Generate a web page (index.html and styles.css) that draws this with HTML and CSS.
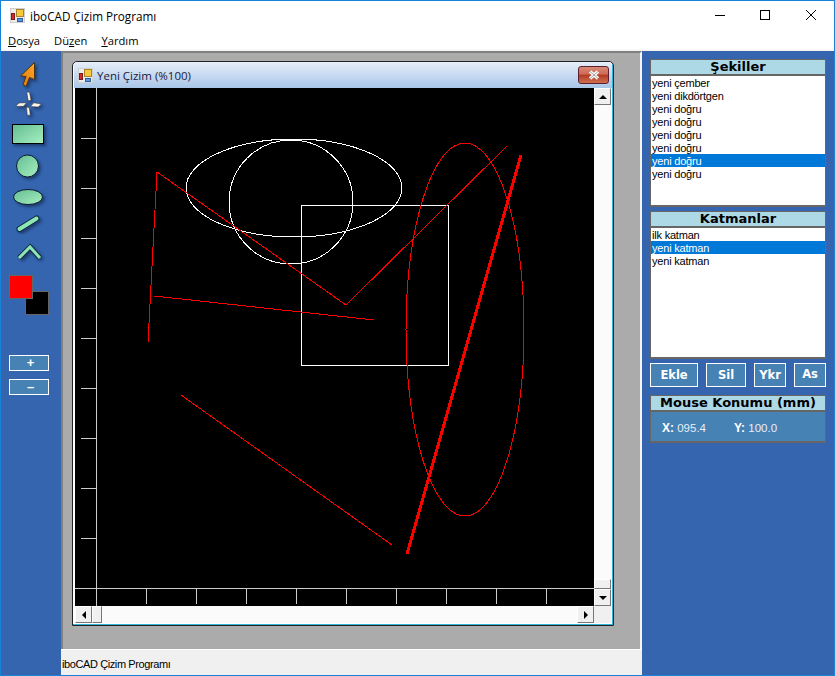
FILE: index.html
```html
<!DOCTYPE html>
<html lang="en">
<head>
	<meta charset="UTF-8">
	<title>iboCAD Çizim Programı</title>
	<link rel="stylesheet" href="styles.css">
</head>
<body>
<div class="app">

	<!-- shared gradients for the toolbar icons -->
	<svg class="defs" width="0" height="0">
		<defs>
			<linearGradient id="mint" x1="0" y1="0" x2="1" y2="1">
				<stop offset="0" stop-color="#63bd92"/>
				<stop offset="1" stop-color="#a8efc0"/>
			</linearGradient>
			<linearGradient id="orange" x1="1" y1="0" x2="0" y2="1">
				<stop offset="0" stop-color="#ffa726"/>
				<stop offset="1" stop-color="#d9780f"/>
			</linearGradient>
			<filter id="shade" x="-30%" y="-30%" width="170%" height="170%">
				<feDropShadow dx="2" dy="2" stdDeviation="1.500" flood-color="#12305f" flood-opacity="0.8"/>
			</filter>
			<g id="appicon">
				<rect x="0.500" y="0.500" width="14" height="14" fill="#ececec" stroke="#d0d0d0"/>
				<rect x="6.500" y="1.500" width="7" height="7" fill="#f6c93a" stroke="#a8842a"/>
				<rect x="1.500" y="5.500" width="3" height="6" fill="#d22b2b" stroke="#7a1c1c"/>
				<rect x="7.500" y="10.500" width="5" height="3" fill="#5a98e4" stroke="#2f5f9f"/>
			</g>
		</defs>
	</svg>

	<header class="titlebar">
		<svg class="app-icon" width="15" height="15"><use href="#appicon"/></svg>
		<span class="title-text">iboCAD Çizim Programı</span>
		<div class="caption-btns">
			<svg width="12" height="13"><path d="M2 6.500h10" stroke="#000" fill="none"/></svg>
			<svg width="12" height="13"><rect x="1.500" y="1.500" width="9" height="9" stroke="#000" fill="none"/></svg>
			<svg width="12" height="13"><path d="M1 1l10 10M11 1l-10 10" stroke="#000" fill="none"/></svg>
		</div>
	</header>

	<nav class="menubar">
		<span><u>D</u>osya</span>
		<span>Dü<u>z</u>en</span>
		<span><u>Y</u>ardım</span>
	</nav>

	<div class="workspace">

		<aside class="toolbar">
			<svg class="tool-icons" width="60" height="208" viewBox="1 62 60 208">
				<path d="M34.500 62.500L20.500 76l5.500.5-3 8 3 2 3.500-9 5 2z" fill="url(#orange)" stroke="#4a3010" filter="url(#shade)"/>
				<g fill="#fff6e8" stroke="#2a2a2a" stroke-width="0.500" filter="url(#shade)">
					<path d="M26.800 92l2.700 .3 1.500 8-2.800 .5z"/>
					<path d="M19 103l7.500-.3-3 3.600-7.800 0z"/>
					<path d="M33.800 102.800l7.500 1.200-3 3-7.800-.6z"/>
					<path d="M26.500 107l2.800 .8 1 7.400-3 0z"/>
				</g>
				<rect x="12.500" y="124.500" width="31" height="19" fill="url(#mint)" stroke="#000" filter="url(#shade)"/>
				<circle cx="27.500" cy="166" r="11" fill="url(#mint)" stroke="#0a1a30" filter="url(#shade)"/>
				<ellipse cx="28" cy="197" rx="14.500" ry="7.500" fill="url(#mint)" stroke="#0a1a30" filter="url(#shade)"/>
				<path d="M19.500 229l17-10.500" stroke="#0a2a40" stroke-width="6" stroke-linecap="round" filter="url(#shade)"/>
				<path d="M19.500 229l17-10.500" stroke="#8fe6b4" stroke-width="4" stroke-linecap="round"/>
				<path d="M19 258l11-11 10 11" fill="none" stroke="#0a2a40" stroke-width="5" filter="url(#shade)"/>
				<path d="M19 258l11-11 10 11" fill="none" stroke="#8fe6b4" stroke-width="3"/>
			</svg>
			<div class="swatches">
				<div class="swatch swatch-back"></div>
				<div class="swatch swatch-fore"></div>
			</div>
			<button class="zoom-btn">+</button>
			<button class="zoom-btn">–</button>
		</aside>

		<div class="center">
			<div class="mdi">
				<section class="child">
					<div class="child-title">
						<svg width="15" height="15"><use href="#appicon"/></svg>
						<span>Yeni Çizim (%100)</span>
						<div class="child-close">
							<svg width="14" height="10"><path d="M3 1.500l8 7M11 1.500l-8 7" stroke="#fff" stroke-width="3.400"/><path d="M3 1.500l8 7M11 1.500l-8 7" stroke="#8a8a8a" stroke-width="0.800"/></svg>
						</div>
					</div>
					<div class="child-body">
						<svg class="canvas" width="519" height="518" viewBox="75 88 519 518">
							<g stroke="#ccc" fill="none" shape-rendering="crispEdges">
								<path d="M96.500 88v518M75 588.500h519"/>
								<path d="M81 138.500h15M81 188.500h15M81 238.500h15M81 288.500h15M81 338.500h15M81 388.500h15M81 438.500h15M81 488.500h15M81 538.500h15"/>
								<path d="M146.500 589v15M196.500 589v15M246.500 589v15M296.500 589v15M346.500 589v15M396.500 589v15M446.500 589v15M496.500 589v15M546.500 589v15"/>
							</g>
							<g stroke="#fff" fill="none" shape-rendering="crispEdges">
								<ellipse cx="294" cy="188" rx="108" ry="49"/>
								<circle cx="291" cy="202" r="62"/>
								<rect x="301.500" y="205.500" width="147" height="160"/>
							</g>
							<g stroke="#f00" fill="none" shape-rendering="crispEdges">
								<path d="M148 342l9-170 189 133 161-159"/>
								<path d="M154 296l220 24"/>
								<path d="M181 395l211 150"/>
								<ellipse cx="465" cy="329.500" rx="59" ry="186.500"/>
								<path d="M521 155l-114 399" stroke-width="3"/>
							</g>
						</svg>
						<div class="vscroll">
							<div class="sbtn"><i class="tri tri-up"></i></div>
							<div class="strack"></div>
							<div class="sthumb-v"></div>
							<div class="sbtn"><i class="tri tri-down"></i></div>
						</div>
						<div class="hscroll">
							<div class="sbtn"><i class="tri tri-left"></i></div>
							<div class="sthumb-h"></div>
							<div class="strack"></div>
							<div class="sbtn"><i class="tri tri-right"></i></div>
						</div>
						<div class="scorner"></div>
					</div>
				</section>
			</div>
			<footer class="statusbar">iboCAD Çizim Programı</footer>
		</div>

		<aside class="side">
			<h3 class="group-head">Şekiller</h3>
			<ul class="listbox">
				<li>yeni çember</li>
				<li>yeni dikdörtgen</li>
				<li>yeni doğru</li>
				<li>yeni doğru</li>
				<li>yeni doğru</li>
				<li>yeni doğru</li>
				<li class="sel">yeni doğru</li>
				<li>yeni doğru</li>
			</ul>
			<h3 class="group-head group-layers">Katmanlar</h3>
			<ul class="listbox">
				<li>ilk katman</li>
				<li class="sel">yeni katman</li>
				<li>yeni katman</li>
			</ul>
			<div class="layer-btns">
				<button class="btn btn-ekle">Ekle</button>
				<button class="btn btn-sil">Sil</button>
				<button class="btn btn-ykr">Ykr</button>
				<button class="btn btn-as">As</button>
			</div>
			<h3 class="group-head group-mouse">Mouse Konumu (mm)</h3>
			<div class="coords">
				<span class="coord"><b>X:</b> 095.4</span>
				<span class="coord"><b>Y:</b> 100.0</span>
			</div>
		</aside>

	</div>
</div>
</body>
</html>
```

FILE: styles.css
```css
* { box-sizing: border-box; }

html, body { margin: 0; height: 100%; }

body {
	background: #fff;
	font-family: "Liberation Sans", sans-serif;
	font-size: 11px;
	overflow: hidden;
}

.defs { position: absolute; }

.app {
	width: 835px;
	height: 676px;
	display: flex;
	flex-direction: column;
	border: 1px solid #1683d8;
}

/* title bar */
.titlebar {
	height: 29px;
	flex: none;
	display: flex;
	align-items: center;
	background: #fff;
	padding-left: 9px;
}

.app-icon { margin-right: 5px; }

.title-text {
	font-family: "Open Sans", sans-serif;
	font-size: 11.700px;
	color: #000;
}

.caption-btns {
	margin-left: auto;
	display: flex;
	gap: 34px;
	padding-right: 17px;
}

.menubar {
	height: 21px;
	flex: none;
	display: flex;
	align-items: center;
	gap: 14px;
	padding-left: 7px;
	background: linear-gradient(#fff 90%, #f0f0f0);
	font-family: "Open Sans", sans-serif;
	font-size: 11.200px;
}

/* main area */
.workspace {
	flex: 1;
	min-height: 0;
	display: flex;
	background: #3465ae;
}

.toolbar {
	width: 60px;
	flex: none;
	display: flex;
	flex-direction: column;
	align-items: flex-start;
}

.tool-icons {
	flex: none;
	display: block;
	margin: 11px 0 5px;
	overflow: visible;
}

.swatches {
	position: relative;
	width: 40px;
	height: 40px;
	margin-left: 8px;
}

.swatch {
	position: absolute;
	width: 24px;
	height: 24px;
	border: 1px solid #666;
}

.swatch-fore { left: 0; top: 0; background: #f00; }
.swatch-back { right: 0; bottom: 0; background: #000; }

.zoom-btn {
	width: 40px;
	height: 16px;
	margin: 0 0 8px 8px;
	padding: 0 0 1px 3px;
	border: 1px solid #fff;
	background: #4682b4;
	color: #fff;
	font: bold 13px "Liberation Sans", sans-serif;
	line-height: 12px;
}

.zoom-btn:first-of-type { margin-top: 40px; }

.center {
	width: 581px;
	flex: none;
	display: flex;
	flex-direction: column;
}

.mdi {
	flex: 1;
	position: relative;
	background: #ababab;
	border-top: 2px solid #808080;
	border-left: 2px solid #808080;
	border-right: 2px solid #f6f6f6;
}

.statusbar {
	height: 26px;
	flex: none;
	background: #f0f0f0;
	border-top: 1px solid #fff;
	padding: 8px 0 0 1px;
	color: #000;
	letter-spacing: -0.400px;
}

/* child window */
.child {
	position: absolute;
	left: 9px;
	top: 8px;
	width: 542px;
	height: 565px;
	background: #fff;
	border: 1px solid #222;
	border-top-left-radius: 5px;
	border-top-right-radius: 5px;
	display: flex;
	flex-direction: column;
	padding: 0 2px 2px;
	box-shadow: inset -1px -1px 0 #2fb4dc;
}

.child-title {
	height: 26px;
	flex: none;
	display: flex;
	align-items: center;
	gap: 4px;
	margin: 0 -1px;
	padding-left: 4px;
	background: linear-gradient(#e6eefa, #a9c6e8);
	font-family: "Open Sans", sans-serif;
	font-size: 11.500px;
	color: #1a1a3a;
	border-top-left-radius: 4px;
	border-top-right-radius: 4px;
}

.child-close {
	margin-left: auto;
	margin-right: 3px;
	width: 31px;
	height: 18px;
	border: 1px solid #5a2030;
	border-radius: 3px;
	background: linear-gradient(#d88a78 0, #cf6a55 45%, #b23a22 50%, #d07050 100%);
	display: flex;
	align-items: center;
	justify-content: center;
}

.child-body {
	flex: 1;
	min-height: 0;
	display: grid;
	grid-template-columns: 519px 17px;
	grid-template-rows: 518px 17px;
	background: #f0f0f0;
}

.canvas { display: block; background: #000; }

/* scroll bars */
.vscroll, .hscroll { display: flex; background: #fbfbfb; }
.vscroll { flex-direction: column; }

.strack { flex: 1; }

.sbtn {
	flex: none;
	width: 17px;
	height: 17px;
	display: flex;
	align-items: center;
	justify-content: center;
	background: #f0f0f0;
	border: 1px solid;
	border-color: #fff #777 #777 #fff;
}

.sthumb-v { height: 10px; width: 17px; background: #f0f0f0; border: 1px solid; border-color: #fff #777 #777 #fff; }
.sthumb-h { width: 10px; height: 17px; background: #f0f0f0; border: 1px solid; border-color: #fff #777 #777 #fff; }

.tri { width: 0; height: 0; border: 4px solid transparent; }
.tri-up { border-bottom-color: #000; margin-top: -4px; }
.tri-down { border-top-color: #000; margin-top: 4px; }
.tri-left { border-right-color: #000; margin-left: -4px; }
.tri-right { border-left-color: #000; margin-left: 4px; }

.scorner { background: #f0f0f0; }

/* right side */
.side {
	flex: 1;
	padding: 8px 8px 0 8px;
	display: flex;
	flex-direction: column;
	align-items: stretch;
}

.group-head {
	margin: 0;
	height: 17px;
	flex: none;
	background: #add8e6;
	border: 1px solid #666;
	border-bottom-width: 2px;
	font: bold 13px/13px "DejaVu Sans", sans-serif;
	text-align: center;
	color: #000;
}

.group-layers { margin-top: 4px; }
.group-mouse { margin-top: 8px; }

.listbox {
	margin: 0;
	padding: 0;
	list-style: none;
	height: 131px;
	background: #fff;
	border: 1px solid #666;
	border-top: 0;
	border-bottom-width: 2px;
	flex: none;
	color: #000;
}

.listbox li {
	height: 13px;
	line-height: 14px;
	padding-left: 1px;
	white-space: nowrap;
	letter-spacing: -0.200px;
}

.listbox .sel { background: #0078d7; color: #fff; }

.layer-btns {
	display: flex;
	gap: 8px;
	margin-top: 4px;
	flex: none;
}

.btn {
	height: 24px;
	padding: 0;
	border: 1px solid #fff;
	background: #4682b4;
	color: #fff;
	font: bold 11.500px "DejaVu Sans", sans-serif;
}

.btn-ekle { width: 48px; }
.btn-sil { width: 40px; }
.btn-ykr { width: 32px; }
.btn-as { width: 32px; padding-bottom: 3px; }

.coords {
	height: 31px;
	flex: none;
	background: #4682b4;
	border: 1px solid #666;
	border-top: 0;
	border-bottom-width: 2px;
	display: flex;
	align-items: center;
	padding: 3px 0 0 11px;
	color: #e8eef4;
	font-size: 11.500px;
}

.coord { width: 72px; }
.coord b { color: #fff; font-size: 12px; }
```
